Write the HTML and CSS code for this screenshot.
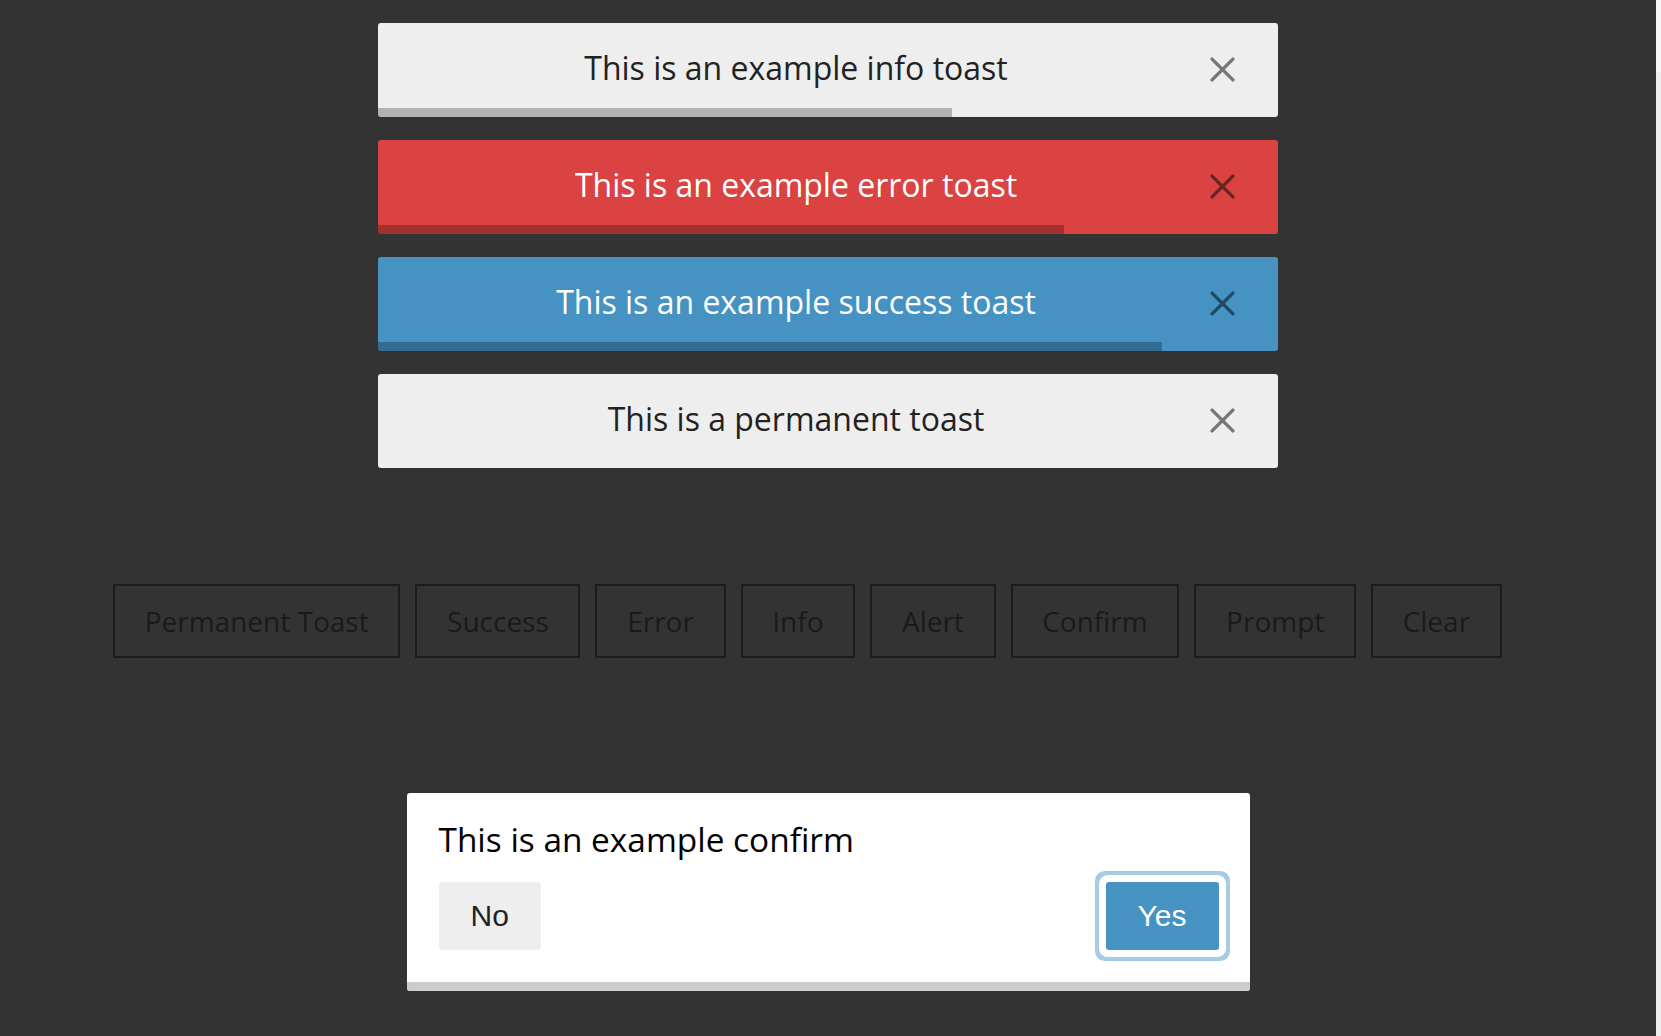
FILE: index.html
```html
<!DOCTYPE html>
<html lang="en">
<head>
<meta charset="utf-8">
<title>Toasts</title>
<link rel="stylesheet" href="styles.css">
</head>
<body>
<div class="page">
  <main class="main">
    <section class="toasts">
      <div class="toast toast-info">
        <div class="toast-body">
          <span class="toast-text">This is an example info toast</span>
          <svg class="toast-close" viewBox="0 0 24 24" aria-label="close"><path d="M2 2 L22 22 M22 2 L2 22"/></svg>
        </div>
        <div class="toast-bar"><div class="bar-fill" style="width:574px"></div></div>
      </div>
      <div class="toast toast-error">
        <div class="toast-body">
          <span class="toast-text">This is an example error toast</span>
          <svg class="toast-close" viewBox="0 0 24 24" aria-label="close"><path d="M2 2 L22 22 M22 2 L2 22"/></svg>
        </div>
        <div class="toast-bar"><div class="bar-fill" style="width:686px"></div></div>
      </div>
      <div class="toast toast-success">
        <div class="toast-body">
          <span class="toast-text">This is an example success toast</span>
          <svg class="toast-close" viewBox="0 0 24 24" aria-label="close"><path d="M2 2 L22 22 M22 2 L2 22"/></svg>
        </div>
        <div class="toast-bar"><div class="bar-fill" style="width:784px"></div></div>
      </div>
      <div class="toast toast-info">
        <div class="toast-body">
          <span class="toast-text">This is a permanent toast</span>
          <svg class="toast-close" viewBox="0 0 24 24" aria-label="close"><path d="M2 2 L22 22 M22 2 L2 22"/></svg>
        </div>
        <div class="toast-bar"><div class="bar-fill" style="width:0px"></div></div>
      </div>
    </section>

    <nav class="actions">
      <button class="action">Permanent Toast</button>
      <button class="action">Success</button>
      <button class="action">Error</button>
      <button class="action">Info</button>
      <button class="action">Alert</button>
      <button class="action">Confirm</button>
      <button class="action">Prompt</button>
      <button class="action">Clear</button>
    </nav>

    <section class="dialog">
      <div class="dialog-body">
        <p class="dialog-text">This is an example confirm</p>
        <div class="dialog-actions">
          <button class="dbtn dbtn-no">No</button>
          <button class="dbtn dbtn-yes">Yes</button>
        </div>
      </div>
      <div class="dialog-bar"></div>
    </section>
  </main>
  <div class="scrollstrip"></div>
</div>
</body>
</html>
```

FILE: styles.css
```css
html, body {
  margin: 0;
  padding: 0;
  background: #333333;
  height: 100%;
}

.page {
  display: flex;
  min-height: 100%;
}

.main {
  flex: 1;
  padding-top: 23px;
  font-family: "Open Sans", "Noto Sans", sans-serif;
}

.scrollstrip {
  width: 5px;
  flex: none;
  background: linear-gradient(to bottom, #f7f7f7 0, #f7f7f7 72px, #eeeeee 72px, #eeeeee 100%);
}

/* Toasts */
.toasts {
  width: 900px;
  margin: 0 auto;
  display: flex;
  flex-direction: column;
  gap: 23px;
}

.toast {
  border-radius: 3px;
  overflow: hidden;
}

.toast-info { background: #eeeeee; color: #222222; }
.toast-error { background: #db4242; color: #ffffff; }
.toast-success { background: #4592c3; color: #ffffff; }

.toast-body {
  display: flex;
  align-items: center;
  padding: 23px 0 18px;
}

.toast-text {
  flex: 1;
  text-align: center;
  font-size: 32px;
  line-height: 44px;
  padding-left: 4px;
}

.toast-close {
  width: 25px;
  height: 25px;
  margin: 2px 43px 0 0;
  fill: none;
  stroke: rgba(0, 0, 0, 0.5);
  stroke-width: 3.2;
  stroke-linecap: round;
}

.toast-bar {
  height: 9px;
}

.bar-fill {
  height: 100%;
  background: rgba(0, 0, 0, 0.25);
}

/* Action buttons */
.actions {
  display: flex;
  gap: 15px;
  padding-left: 113px;
  margin-top: 116px;
}

.action {
  background: transparent;
  border: 2px solid #1c1c1c;
  color: #1a1a1a;
  font-family: "Open Sans", "Noto Sans", sans-serif;
  font-size: 28px;
  line-height: 38px;
  padding: 16px 29.7px;
  margin: 0;
  border-radius: 0;
}

/* Confirm dialog */
.dialog {
  width: 843px;
  margin: 135px auto 0;
  background: #ffffff;
  border-radius: 3px;
  overflow: hidden;
}

.dialog-body {
  padding: 24px 31px 32px 32px;
}

.dialog-text {
  margin: 0 0 21px;
  font-size: 33.4px;
  line-height: 44px;
  color: #000000;
}

.dialog-actions {
  display: flex;
  justify-content: space-between;
  align-items: center;
}

.dbtn {
  height: 68px;
  padding: 0 32px;
  border: none;
  border-radius: 3px;
  font-family: "Liberation Sans", Arial, sans-serif;
  font-size: 30px;
  margin: 0;
}

.dbtn-no {
  background: #eeeeee;
  color: #222222;
}

.dbtn-yes {
  background: #4592c3;
  color: #ffffff;
  box-shadow: 0 0 0 7px #ffffff, 0 0 0 11px #a6cbe2;
}

.dialog-bar {
  height: 9px;
  background: #cccccc;
}
```
